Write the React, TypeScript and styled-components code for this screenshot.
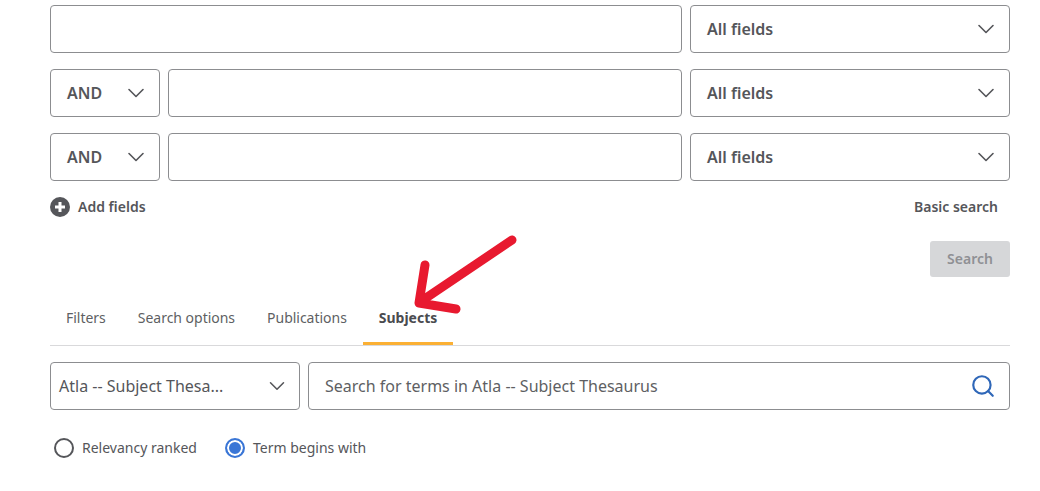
import React from 'react';
import styled, { createGlobalStyle } from 'styled-components';
import { ChevronDown, Search as SearchIcon } from 'lucide-react';

const GlobalStyle = createGlobalStyle`
  html, body {
    margin: 0;
    padding: 0;
    background: #fff;
  }
  body {
    font-family: "Noto Sans", "Open Sans", sans-serif;
    color: #55565a;
  }
`;

const Page = styled.div`
  position: relative;
  width: 1040px;
  height: 491px;
  box-sizing: border-box;
  padding: 5px 30px 0 50px;
  overflow: hidden;
`;

const Rows = styled.div`
  display: flex;
  flex-direction: column;
  gap: 16px;
`;

const Row = styled.div`
  display: flex;
  gap: 8px;
`;

const Field = styled.input`
  flex: 1;
  min-width: 0;
  height: 48px;
  box-sizing: border-box;
  border: 1px solid #8c8d90;
  border-radius: 4px;
  background: #fff;
  outline: none;
`;

const Select = styled.div<{ $width: number; $pad?: number; $light?: boolean }>`
  display: flex;
  align-items: center;
  justify-content: space-between;
  flex: none;
  width: ${p => p.$width}px;
  height: 48px;
  box-sizing: border-box;
  padding: 0 9px 0 ${p => p.$pad ?? 16}px;
  border: 1px solid #8c8d90;
  border-radius: 4px;
  font-size: 16px;
  font-weight: ${p => (p.$light ? 400 : 600)};
  color: #55565a;
`;

const FieldActions = styled.div`
  display: flex;
  align-items: center;
  justify-content: space-between;
  height: 20px;
  margin-top: 16px;
  padding-right: 12px;
`;

const ActionLink = styled.span`
  display: inline-flex;
  align-items: center;
  gap: 8px;
  font-size: 14px;
  line-height: 18px;
  font-weight: 600;
  color: #55565a;
`;

const SubmitRow = styled.div`
  display: flex;
  justify-content: flex-end;
  margin-top: 24px;
`;

const SubmitButton = styled.button`
  width: 80px;
  height: 36px;
  border: 0;
  border-radius: 3px;
  background: #d6d7d9;
  color: #8f9094;
  font-family: inherit;
  font-size: 14px;
  font-weight: 600;
  padding: 0 0 2px;
`;

const Tabs = styled.div`
  display: flex;
  height: 53px;
  margin-top: 16px;
  margin-bottom: 16px;
  box-sizing: border-box;
  border-bottom: 1px solid #d9d9db;
`;

const Tab = styled.div<{ $active?: boolean }>`
  display: flex;
  align-items: center;
  padding: 0 16px;
  height: 52px;
  box-sizing: border-box;
  font-size: 14px;
  letter-spacing: -0.02px;
  font-weight: ${p => (p.$active ? 700 : 400)};
  color: ${p => (p.$active ? '#4a4b4f' : '#5e5f63')};
  border-bottom: 3px solid ${p => (p.$active ? '#fbb034' : 'transparent')};
`;

const TermSearch = styled.div`
  flex: 1;
  display: flex;
  align-items: center;
  justify-content: space-between;
  height: 48px;
  box-sizing: border-box;
  padding: 0 13px 0 16px;
  border: 1px solid #8c8d90;
  border-radius: 4px;
  font-size: 16px;
  color: #5e5f63;
`;

const RadioRow = styled.div`
  display: flex;
  align-items: center;
  gap: 28px;
  margin-top: 28px;
  padding-left: 4px;
`;

const RadioLabel = styled.label`
  display: inline-flex;
  align-items: center;
  gap: 8px;
  height: 20px;
  font-size: 14px;
  line-height: 18px;
  color: #55565a;
`;

const RadioDot = styled.span<{ $checked?: boolean }>`
  width: 20px;
  height: 20px;
  box-sizing: border-box;
  border-radius: 50%;
  border: 2px solid ${p => (p.$checked ? '#3a76d6' : '#55565a')};
  background: ${p => (p.$checked ? '#3a76d6' : '#fff')};
  box-shadow: ${p => (p.$checked ? 'inset 0 0 0 2px #fff' : 'none')};
`;

const Arrow = styled.svg`
  position: absolute;
  left: 0;
  top: 0;
  pointer-events: none;
`;

function AddIcon() {
  return (
    <svg width="20" height="20" viewBox="0 0 20 20">
      <circle cx="10" cy="10" r="10" fill="#55565a" />
      <path d="M10 5v10M5 10h10" stroke="#fff" strokeWidth="3" />
    </svg>
  );
}

function Chevron({ size = 28 }: { size?: number }) {
  return <ChevronDown size={size} strokeWidth={1.4} color="#55565a" />;
}

function AllFields() {
  return (
    <Select $width={320}>
      All fields
      <Chevron />
    </Select>
  );
}

function BoolRow() {
  return (
    <Row>
      <Select $width={110}>
        AND
        <Chevron />
      </Select>
      <Field />
      <AllFields />
    </Row>
  );
}

export default function App() {
  return (
    <Page>
      <GlobalStyle />
      <Rows>
        <Row>
          <Field />
          <AllFields />
        </Row>
        <BoolRow />
        <BoolRow />
      </Rows>
      <FieldActions>
        <ActionLink>
          <AddIcon />
          Add fields
        </ActionLink>
        <ActionLink>Basic search</ActionLink>
      </FieldActions>
      <SubmitRow>
        <SubmitButton>Search</SubmitButton>
      </SubmitRow>
      <Tabs>
        <Tab>Filters</Tab>
        <Tab>Search options</Tab>
        <Tab>Publications</Tab>
        <Tab $active>Subjects</Tab>
      </Tabs>
      <Row>
        <Select $width={250} $pad={8} $light>
          Atla -- Subject Thesa...
          <Chevron size={26} />
        </Select>
        <TermSearch>
          Search for terms in Atla -- Subject Thesaurus
          <SearchIcon size={26} strokeWidth={2} color="#2f67b8" />
        </TermSearch>
      </Row>
      <RadioRow>
        <RadioLabel>
          <RadioDot />
          Relevancy ranked
        </RadioLabel>
        <RadioLabel>
          <RadioDot $checked />
          Term begins with
        </RadioLabel>
      </RadioRow>
      <Arrow width="1040" height="491" viewBox="0 0 1040 491">
        <path
          d="M512 240L420 302M425 265L419 303L456 309"
          fill="none"
          stroke="#e8192f"
          strokeWidth="9"
          strokeLinecap="round"
          strokeLinejoin="round"
        />
      </Arrow>
    </Page>
  );
}
